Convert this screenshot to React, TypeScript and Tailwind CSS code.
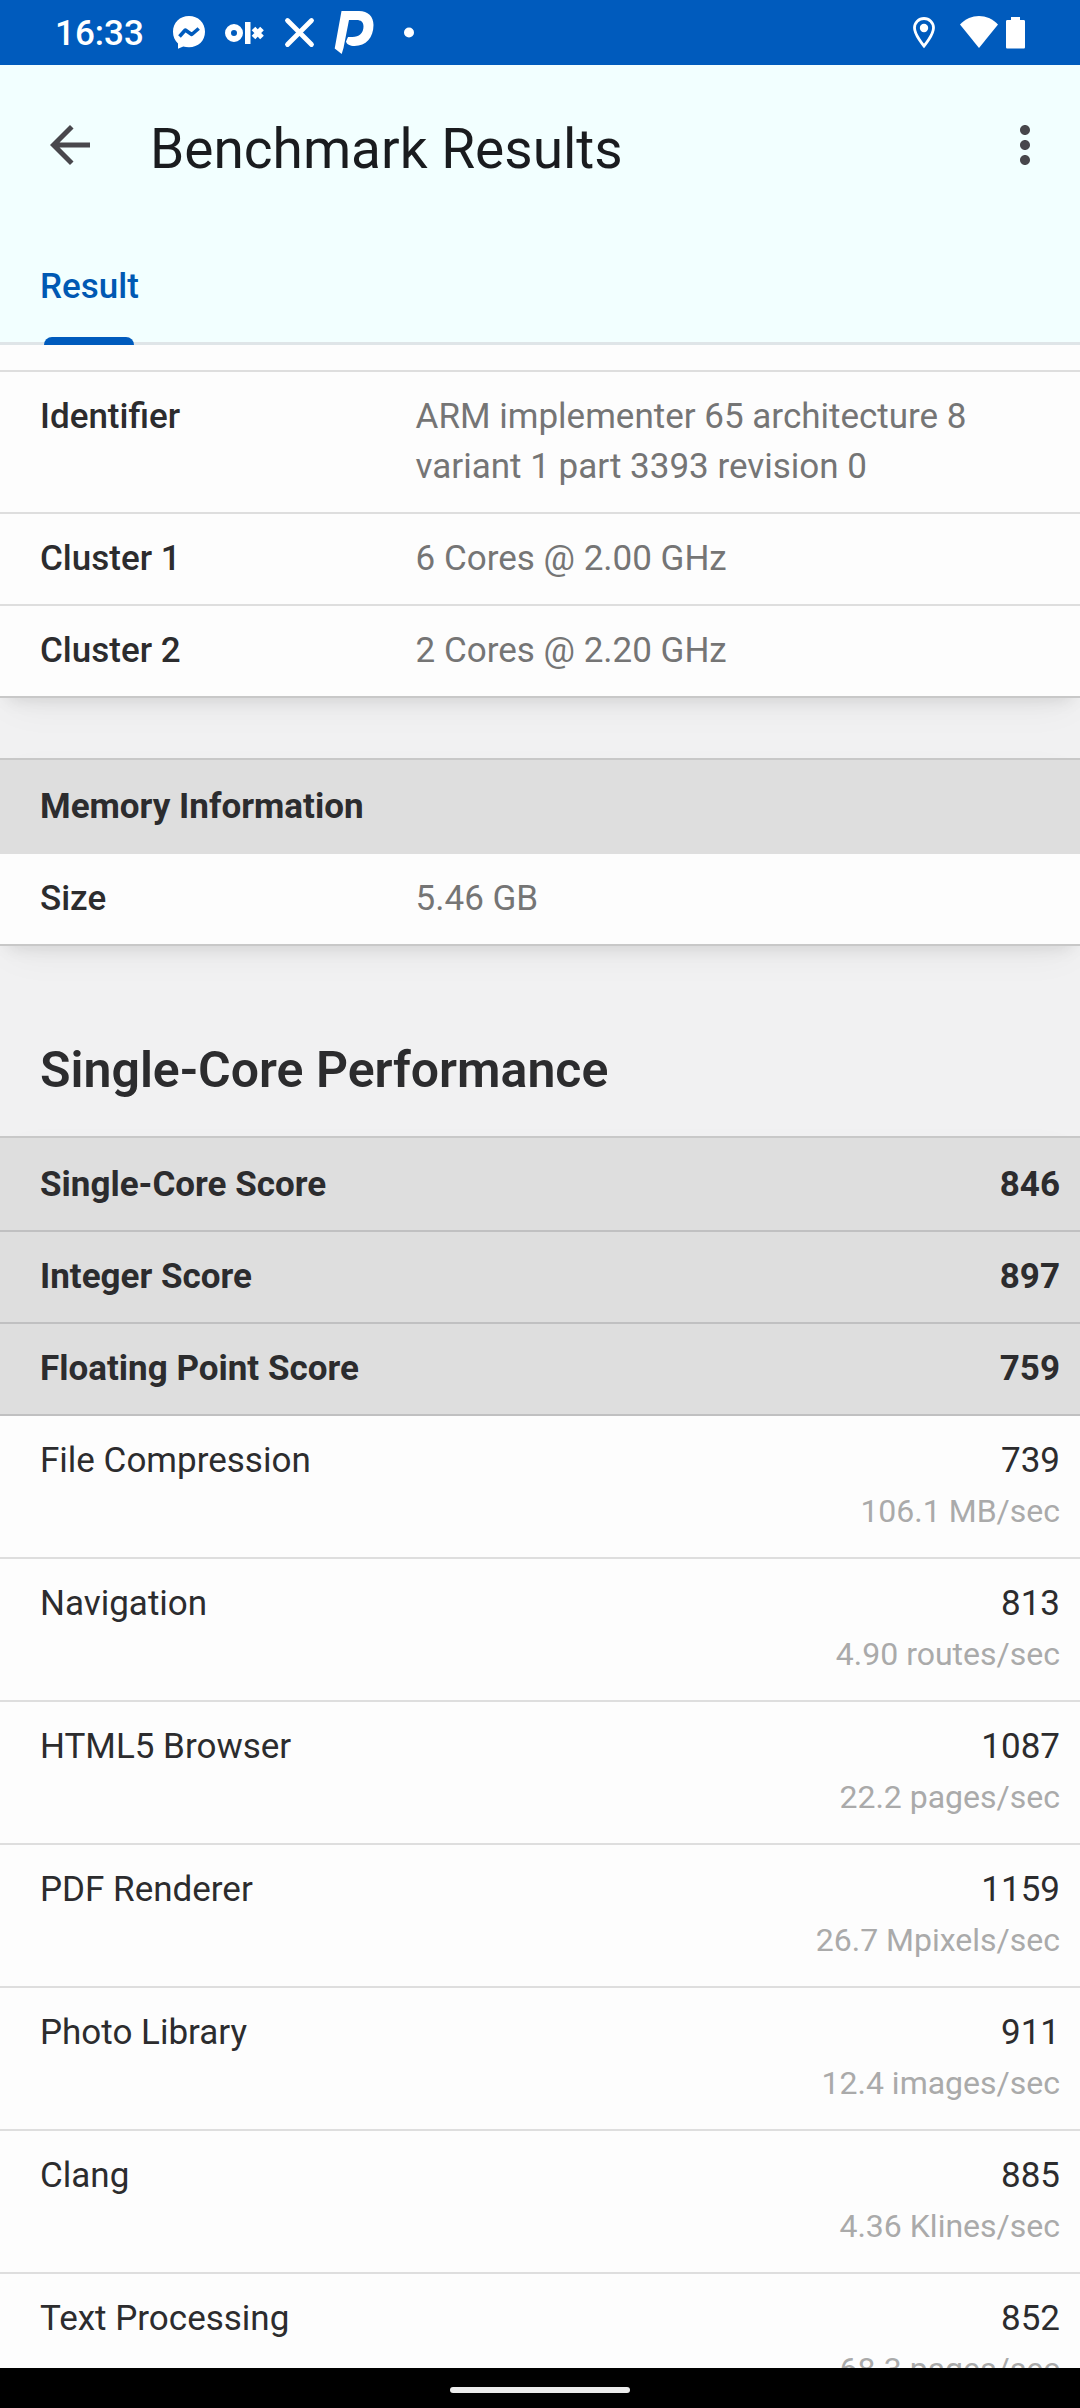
import { MdArrowBack, MdMoreVert } from "react-icons/md";

const cpuRows = [
  { label: "Identifier", value: "ARM implementer 65 architecture 8 variant 1 part 3393 revision 0" },
  { label: "Cluster 1", value: "6 Cores @ 2.00 GHz" },
  { label: "Cluster 2", value: "2 Cores @ 2.20 GHz" },
];

const memoryRows = [{ label: "Size", value: "5.46 GB" }];

const scores = [
  { label: "Single-Core Score", score: 846 },
  { label: "Integer Score", score: 897 },
  { label: "Floating Point Score", score: 759 },
];

const workloads = [
  { label: "File Compression", score: 739, rate: "106.1 MB/sec" },
  { label: "Navigation", score: 813, rate: "4.90 routes/sec" },
  { label: "HTML5 Browser", score: 1087, rate: "22.2 pages/sec" },
  { label: "PDF Renderer", score: 1159, rate: "26.7 Mpixels/sec" },
  { label: "Photo Library", score: 911, rate: "12.4 images/sec" },
  { label: "Clang", score: 885, rate: "4.36 Klines/sec" },
  { label: "Text Processing", score: 852, rate: "68.3 pages/sec" },
];

function StatusBar() {
  return (
    <div className="flex h-[65px] shrink-0 items-center justify-between bg-[#005bbd] pl-[55px] pr-[54px] text-white">
      <div className="flex items-center">
        <span className="w-[118px] pt-0.5 text-[35px] leading-[50px] font-medium">16:33</span>
        <svg className="h-[65px] w-[245px]" viewBox="173 0 245 65" fill="currentColor" aria-hidden="true">
          <path d="M189 16c-9.200 0-16 6.700-16 15.800 0 4.800 1.700 8.800 5 11.700v5.300l5.200-2.400c1.800.5 3.700.8 5.800.8 9.200 0 16-6.400 16-15.500S198.200 16 189 16z" />
          <path d="M179.500 36.500l5.800-6.500 6.400 4.500 7-6" fill="none" stroke="#005bbd" strokeWidth="3.600" strokeLinejoin="round" />
          <circle cx="234" cy="33" r="6" fill="none" stroke="currentColor" strokeWidth="6" />
          <rect x="245" y="22" width="5.500" height="22" />
          <path d="M253.500 28.500l8.500 9M262 28.500l-8.500 9" stroke="currentColor" strokeWidth="5" />
          <path d="M287.500 20.500l24 24M311.500 20.500l-24 24" stroke="currentColor" strokeWidth="4.800" strokeLinecap="round" />
          <path d="M341.500 11H359c9 0 14.500 5.500 14.500 14C373.500 37.500 366 46 354.500 46c-4.500 0-7.800-1.700-8.500-4.500l2-4.500h4.500c6.500 0 11-4 11-10.500 0-4.500-2.500-6.500-7-6.500H349l-5.500 28-1.800 6-7-5.500z" />
          <circle cx="409" cy="32.500" r="5" />
        </svg>
      </div>
      <svg className="h-[65px] w-[114px]" viewBox="912 0 114 65" fill="currentColor" aria-hidden="true">
        <path d="M924 18.500c-5.300 0-9.500 4.100-9.500 9.300C914.500 35 924 46 924 46s9.500-11 9.500-18.200c0-5.200-4.200-9.300-9.500-9.300z" fill="none" stroke="currentColor" strokeWidth="2.800" />
        <circle cx="924" cy="28" r="4.200" />
        <path d="M960 24.500c11-11.300 27-11.300 38 0L979 48z" />
        <path d="M1011 17h9v3h3.500c1 0 1.500.5 1.500 1.500v25.500c0 1-.5 1.500-1.500 1.500h-16c-1 0-1.500-.5-1.500-1.500V21.500c0-1 .5-1.500 1.500-1.500h3.500z" />
      </svg>
    </div>
  );
}

function AppBar() {
  return (
    <header className="shrink-0 border-b-[3px] border-[#dfe5e8] bg-[#f2ffff]">
      <div className="flex h-40 items-center pl-10 pr-[25px]">
        <button type="button" aria-label="Back" className="text-[#48474c]">
          <MdArrowBack className="size-[60px]" />
        </button>
        <h1 className="ml-[50px] flex-1 pt-[7px] text-[55px] leading-[60px] text-[#1a1c1f]">Benchmark Results</h1>
        <button type="button" aria-label="More options" className="text-[#48474c]">
          <MdMoreVert className="size-[60px]" />
        </button>
      </div>
      <div role="tablist" className="-mb-[3px] flex h-[120px] px-10">
        <button
          type="button"
          role="tab"
          aria-selected="true"
          className="flex flex-col items-center justify-between pt-[37px] text-[35px] leading-[50px] font-medium text-[#0059b3]"
        >
          Result
          <span className="h-2 w-[90px] rounded-t-lg bg-[#005bbd]" />
        </button>
      </div>
    </header>
  );
}

function InfoTable({ title, rows }: { title?: string; rows: { label: string; value: string }[] }) {
  return (
    <table className="w-full border-collapse text-left">
      {title && (
        <thead>
          <tr className="bg-[#dedede]">
            <th colSpan={2} className="px-10 pt-[22px] pb-5 font-bold">
              {title}
            </th>
          </tr>
        </thead>
      )}
      <tbody>
        {rows.map((row) => (
          <tr key={row.label} className="border-t-2 border-[#dedede] align-top">
            <th scope="row" className="w-[37%] py-5 pl-10 font-medium">
              {row.label}
            </th>
            <td className="py-5 pl-4 pr-20 text-[#757575]">{row.value}</td>
          </tr>
        ))}
      </tbody>
    </table>
  );
}

function ScoreTable() {
  return (
    <table className="w-full border-collapse text-left">
      <thead>
        {scores.map((row) => (
          <tr key={row.label} className="border-b-2 border-[#c0c0c1] bg-[#dedede] first:[&>*]:pt-[22px]">
            <th scope="row" className="py-5 pl-10 font-bold">
              {row.label}
            </th>
            <td className="py-5 pr-5 text-right font-bold">{row.score}</td>
          </tr>
        ))}
      </thead>
      <tbody>
        {workloads.map((row) => (
          <tr key={row.label} className="border-b-2 border-[#dedede] align-top">
            <th scope="row" className="py-5 pl-10 font-normal">
              {row.label}
            </th>
            <td className="py-5 pr-5 text-right">
              {row.score}
              <span className="block text-[32px] leading-[51px] text-[#aaaaaa]">{row.rate}</span>
            </td>
          </tr>
        ))}
      </tbody>
    </table>
  );
}

export default function App() {
  return (
    <div className="flex h-screen flex-col bg-[#f1f1f2] font-[Roboto,sans-serif] text-[#2c2c2e]">
      <StatusBar />
      <AppBar />
      <main className="min-h-0 flex-1 overflow-hidden text-[35px] leading-[50px]">
        <section className="border-b-2 border-[#c8c8c8] bg-[#fdfdfd] pt-[25px] shadow-[0_10px_16px_-8px_rgba(0,0,0,0.10),0_14px_40px_-10px_rgba(0,0,0,0.06)]">
          <InfoTable rows={cpuRows} />
        </section>
        <section className="mt-[60px] border-y-2 border-[#c8c8c8] bg-[#fdfdfd] shadow-[0_10px_16px_-8px_rgba(0,0,0,0.10),0_14px_40px_-10px_rgba(0,0,0,0.06)]">
          <InfoTable title="Memory Information" rows={memoryRows} />
        </section>
        <h2 className="px-10 pt-[94px] pb-9 text-[50px] leading-[60px] font-semibold">Single-Core Performance</h2>
        <section className="border-y-2 border-[#c8c8c8] bg-[#fdfdfd] shadow-[0_10px_16px_-8px_rgba(0,0,0,0.10),0_14px_40px_-10px_rgba(0,0,0,0.06)]">
          <ScoreTable />
        </section>
      </main>
      <footer className="z-10 flex h-10 shrink-0 items-center justify-center bg-black pt-1">
        <span className="h-1.5 w-[180px] rounded-full bg-[#ececec]" />
      </footer>
    </div>
  );
}
